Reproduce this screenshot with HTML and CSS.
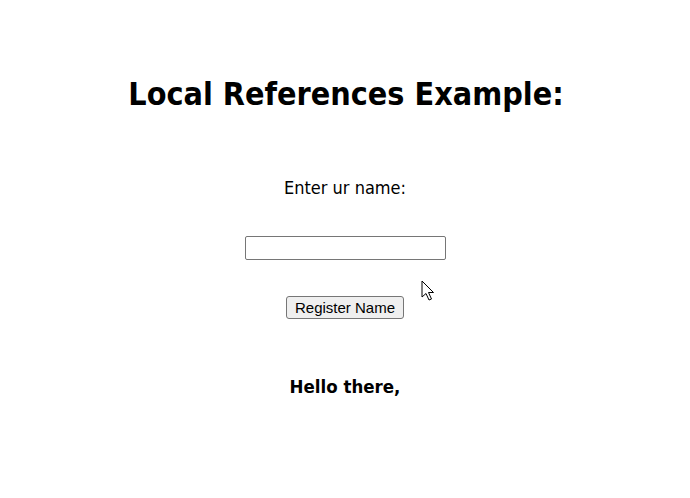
FILE: index.html
```html
<!DOCTYPE html>
<html>
<head>
<meta charset="utf-8">
<link rel="stylesheet" href="styles.css">
</head>
<body>
<main class="page">
  <h1 class="title">Local References Example:</h1>
  <p class="label">Enter ur name:</p>
  <input class="name-input" type="text">
  <button class="register-btn">Register Name</button>
  <h3 class="greeting">Hello there,</h3>
</main>
<svg class="cursor" width="14" height="22" viewBox="0 0 14 22">
  <path d="M1 1 L1 17 L5 13.5 L8 20 L10.5 19 L7.5 12.5 L12.5 12.5 Z" fill="#fff" stroke="#000" stroke-width="1" stroke-linejoin="miter"/>
</svg>
</body>
</html>
```
FILE: styles.css
```css
html, body {
  margin: 0;
  padding: 0;
  background: #fff;
}
body {
  font-family: "DejaVu Sans Condensed", "DejaVu Sans", sans-serif;
  color: #000;
  position: relative;
  width: 690px;
  height: 498px;
  overflow: hidden;
}
.page {
  display: flex;
  flex-direction: column;
  align-items: center;
  padding-top: 74px;
}
.title {
  margin: 0 0 0 2px;
  font-size: 32px;
  font-weight: bold;
  line-height: 40px;
}
.label {
  margin: 63px 0 0;
  font-size: 18px;
  line-height: 22px;
}
.name-input {
  margin-top: 37px;
  width: 201px;
  height: 24px;
  box-sizing: border-box;
  border: 1px solid #767676;
  border-radius: 2px;
  padding: 1px 2px;
}
.register-btn {
  margin-top: 36px;
  width: 118px;
  height: 23px;
  box-sizing: border-box;
  font-family: "Liberation Sans", Arial, sans-serif;
  font-size: 15px;
  color: #000;
  background: #efefef;
  border: 1px solid #767676;
  border-radius: 3px;
  padding: 0;
}
.greeting {
  margin: 56px 0 0;
  font-size: 18.5px;
  font-weight: bold;
  line-height: 24px;
}
.cursor {
  position: absolute;
  left: 421px;
  top: 280px;
}
```
